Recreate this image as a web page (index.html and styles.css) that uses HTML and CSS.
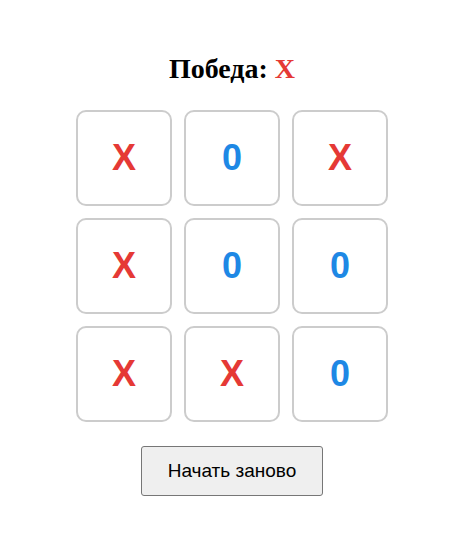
FILE: index.html
```html
<!DOCTYPE html>
<html lang="ru">
<head>
<meta charset="utf-8">
<title>Крестики-нолики</title>
<link rel="stylesheet" href="styles.css">
</head>
<body>
<div class="game">
  <h2 class="status">Победа: <span class="x">X</span></h2>
  <div class="board">
    <div class="cell x">X</div>
    <div class="cell o">0</div>
    <div class="cell x">X</div>
    <div class="cell x">X</div>
    <div class="cell o">0</div>
    <div class="cell o">0</div>
    <div class="cell x">X</div>
    <div class="cell x">X</div>
    <div class="cell o">0</div>
  </div>
  <button class="restart">Начать заново</button>
</div>
</body>
</html>
```
FILE: styles.css
```css
html, body {
  margin: 0;
  padding: 0;
  background: #fff;
}
.game {
  display: flex;
  flex-direction: column;
  align-items: center;
  padding-top: 53px;
}
.status {
  margin: 0 0 25px;
  font-family: "Liberation Serif", serif;
  font-size: 28px;
  font-weight: bold;
  line-height: 32px;
  color: #000;
}
.x { color: #e53935; }
.o { color: #1e88e5; }
.board {
  display: grid;
  grid-template-columns: repeat(3, 96px);
  grid-auto-rows: 96px;
  gap: 12px;
}
.cell {
  box-sizing: border-box;
  border: 2px solid #ccc;
  border-radius: 10px;
  display: flex;
  align-items: center;
  justify-content: center;
  font-family: "Liberation Sans", Arial, sans-serif;
  font-weight: bold;
  font-size: 36px;
}
.restart {
  margin-top: 24px;
  box-sizing: border-box;
  width: 182px;
  height: 50px;
  font-family: "Liberation Sans", Arial, sans-serif;
  font-size: 19px;
  color: #000;
  background: #efefef;
  border: 1px solid #767676;
  border-radius: 3px;
}
```
